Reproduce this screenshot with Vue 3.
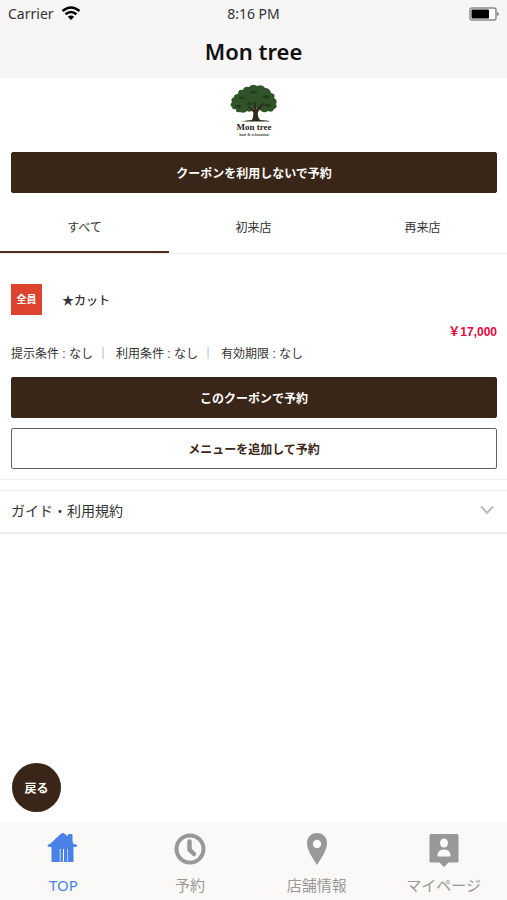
<template>
  <div class="app-screen">
    <header class="app-header">
      <div class="status-bar">
        <div class="carrier">
          <span>Carrier</span>
          <svg class="wifi-icon" viewBox="0 0 20 14" aria-hidden="true">
            <path d="M1.500 5 Q10 -2 18.500 5" />
            <path d="M4.500 8.300 Q10 3.700 15.500 8.300" />
            <path class="wifi-dot" d="M6.800 10.800 Q10 8 13.200 10.800 L10 14 Z" />
          </svg>
        </div>
        <span>8:16 PM</span>
        <svg class="battery-icon" viewBox="0 0 30 14" aria-hidden="true">
          <rect x="1" y="1" width="26" height="12" rx="2" fill="#fff" stroke="#8b8b8b" stroke-width="1.500" />
          <rect x="2.500" y="2.500" width="17.500" height="9" rx="1" fill="#000" />
          <path d="M28 5 Q30 5.500 30 7 Q30 8.500 28 9 Z" fill="#8b8b8b" />
        </svg>
      </div>
      <h1 class="app-title">Mon tree</h1>
    </header>

    <main class="content">
      <svg class="shop-logo" viewBox="0 0 50 56" role="img" aria-label="Mon tree">
        <path
          fill="#315329"
          d="M3 23 Q0 21 3 18 Q1 15 5 13 Q5 10 9 10 Q9 5 14 6 Q15 2 20 3 Q24 -1 28 2 Q34 0 36 4 Q41 4 42 9 Q47 10 45 14 Q49 16 47 20 Q49 24 45 25 Q44 29 39 27 Q35 30 31 26 L28 24 L24 26 Q21 29 18 27 Q15 30 11 28 Q6 29 7 25 Q3 26 3 23 Z"
        />
        <path
          fill="#1f3c1b"
          d="M9 14 Q13 11 16 14 Q12 16 9 14 Z M20 8 Q25 5 29 9 Q24 11 20 8 Z M33 13 Q38 9 41 13 Q37 16 33 13 Z M17 20 Q21 17 25 20 Q21 22 17 20 Z M34 21 Q40 18 43 22 Q38 24 34 21 Z M6 22 Q10 19 13 23 Q9 25 6 22 Z"
        />
        <path
          fill="#33291f"
          d="M23 36 Q25 31 24 28 L18 22 L20 22 L25 26 L25 18 L27 18 L27 25 L34 19 L35 20 L29 28 Q28 32 31 36 Q38 36 41 37.500 L13 37.500 Q17 36 23 36 Z"
        />
        <text class="logo-name" x="25" y="46" text-anchor="middle">Mon tree</text>
        <text class="logo-sub" x="25" y="52" text-anchor="middle">hair &amp; relaxation</text>
      </svg>

      <div class="action-row">
        <button type="button" class="btn btn-primary">クーポンを利用しないで予約</button>
      </div>

      <div class="tabs" role="tablist">
        <button
          v-for="tab in tabs"
          :key="tab"
          type="button"
          role="tab"
          class="tab"
          :class="{ active: tab === activeTab }"
          :aria-selected="tab === activeTab"
          @click="activeTab = tab"
        >
          {{ tab }}
        </button>
      </div>

      <article class="coupon">
        <div class="coupon-head">
          <span class="coupon-tag">全員</span>
          <h2 class="coupon-name">★カット</h2>
        </div>
        <p class="coupon-price">￥17,000</p>
        <ul class="conditions">
          <li v-for="item in conditions" :key="item">{{ item }}</li>
        </ul>
        <div class="coupon-actions">
          <button type="button" class="btn btn-primary">このクーポンで予約</button>
          <button type="button" class="btn btn-outline">メニューを追加して予約</button>
        </div>
      </article>

      <button type="button" class="guide">
        <span>ガイド・利用規約</span>
        <svg class="chevron" viewBox="0 0 14 10" aria-hidden="true">
          <path d="M1 1.500 L7 8 L13 1.500" />
        </svg>
      </button>

      <button type="button" class="back-button">戻る</button>
    </main>

    <nav class="bottom-nav">
      <a href="#top" class="nav-item active">
        <svg class="nav-icon" viewBox="0 0 34 34" aria-hidden="true">
          <path d="M17 1 Q18.500 1 22 4.500 V3 Q22 2 23 2 H25.500 Q26.500 2 26.500 3 V9 L27.500 12 Q31 12 31 13.500 Q31 15 27.500 15 V30 H21.800 V17 H21.200 V30 H18 V17 H17 V30 H14.500 V17 H13.800 V30 H5.500 V15 Q1.500 15 1.500 13.500 Q1.500 12 4 12 L14 2.500 Q15.500 1 17 1 Z" />
        </svg>
        <span>TOP</span>
      </a>
      <a href="#reserve" class="nav-item">
        <svg class="nav-icon" viewBox="0 0 34 34" aria-hidden="true">
          <circle cx="17" cy="17" r="13.500" fill="none" stroke="currentColor" stroke-width="4" />
          <path d="M16.500 9.500 V17.500 L21 22" fill="none" stroke="currentColor" stroke-width="4.500" stroke-linecap="round" />
        </svg>
        <span>予約</span>
      </a>
      <a href="#shop" class="nav-item">
        <svg class="nav-icon" viewBox="0 0 34 34" aria-hidden="true">
          <path
            fill-rule="evenodd"
            d="M17 1 C11 1 7 5.500 7 11 C7 18 12.500 26 17 33 C21.500 26 27 18 27 11 C27 5.500 23 1 17 1 Z M17 7.800 A4.200 4.200 0 1 1 17 16.200 A4.200 4.200 0 1 1 17 7.800 Z"
          />
        </svg>
        <span>店舗情報</span>
      </a>
      <a href="#mypage" class="nav-item">
        <svg class="nav-icon" viewBox="0 0 34 34" aria-hidden="true">
          <path d="M4 2 H30 Q31.500 2 31.500 3.500 V29 Q31.500 30.500 30 30.500 H21.500 L17 35 L12.500 30.500 H4 Q2.500 30.500 2.500 29 V3.500 Q2.500 2 4 2 Z" />
          <ellipse cx="17" cy="11" rx="4" ry="4.500" fill="#faf9f8" />
          <path d="M10.500 24.500 V22.500 Q11.500 17.500 17 17.500 Q22.500 17.500 23.500 22.500 V24.500 Z" fill="#faf9f8" />
        </svg>
        <span>マイページ</span>
      </a>
    </nav>
  </div>
</template>

<script setup>
import { ref } from 'vue';

const tabs = ['すべて', '初来店', '再来店'];
const activeTab = ref('すべて');
const conditions = ['提示条件 : なし', '利用条件 : なし', '有効期限 : なし'];
</script>

<style>
body {
  margin: 0;
  background: #fff;
}
</style>

<style scoped>
.app-screen {
  display: flex;
  flex-direction: column;
  min-height: 100vh;
  background: #fff;
  color: #333;
  font-family: "Liberation Sans", "Noto Sans CJK JP", sans-serif;
  font-size: 12px;
}

button {
  margin: 0;
  padding: 0;
  border: 0;
  background: none;
  color: inherit;
  font-family: inherit;
  font-size: 12px;
  cursor: pointer;
}

.app-header {
  height: 78px;
  background: #f7f5f6;
  font-family: "Noto Sans", "Noto Sans CJK JP", sans-serif;
}

.status-bar {
  display: grid;
  grid-template-columns: 1fr auto 1fr;
  align-items: center;
  height: 27px;
  padding: 0 8px;
  font-size: 14px;
  color: #333;
}

.carrier {
  display: flex;
  align-items: center;
  gap: 7px;
}

.wifi-icon {
  width: 20px;
  height: 14px;
  margin-bottom: 2px;
  fill: none;
  stroke: #000;
  stroke-width: 2.5;
}

.wifi-icon .wifi-dot {
  fill: #000;
  stroke: none;
}

.battery-icon {
  justify-self: end;
  width: 30px;
  height: 14px;
}

.app-title {
  margin: 0;
  font-size: 22px;
  font-weight: 600;
  line-height: 48px;
  text-align: center;
  color: #111;
}

.content {
  display: flex;
  flex: 1;
  flex-direction: column;
}

.shop-logo {
  align-self: center;
  width: 50px;
  height: 56px;
  margin: 6px 0 12px;
}

.logo-name {
  font-family: "Liberation Serif", serif;
  font-size: 9px;
  font-weight: 700;
  fill: #2c1d1a;
}

.logo-sub {
  font-family: "Liberation Serif", serif;
  font-size: 4px;
  font-weight: 700;
  fill: #444;
}

.action-row {
  padding: 0 10px 0 11px;
}

.btn {
  display: block;
  width: 100%;
  height: 41px;
  border: 1px solid #3a2618;
  border-radius: 2px;
  font-weight: 700;
}

.btn-primary {
  background: #3a2618;
  color: #fff;
}

.btn-outline {
  background: #fff;
  border-color: #6b5f57;
  color: #3a2618;
}

.tabs {
  display: grid;
  grid-template-columns: repeat(3, 1fr);
  margin-top: 8px;
  border-bottom: 1px solid #eee;
}

.tab {
  height: 52px;
  border-bottom: 2px solid transparent;
}

.tab.active {
  border-color: #4a2c20;
}

.coupon {
  padding: 30px 10px 10px 11px;
  border-bottom: 1px solid #eee;
}

.coupon-head {
  display: flex;
  align-items: center;
  gap: 20px;
}

.coupon-tag {
  width: 31px;
  background: #dc4430;
  color: #fff;
  font-size: 10px;
  font-weight: 700;
  line-height: 31px;
  text-align: center;
}

.coupon-name {
  margin: 0;
  font-size: 12px;
  font-weight: 500;
}

.coupon-price {
  margin: 6px 0 0;
  color: #e6063c;
  font-weight: 700;
  line-height: 22px;
  text-align: right;
}

.conditions {
  display: flex;
  margin: 0;
  padding: 0;
  list-style: none;
  line-height: 22px;
}

.conditions li + li::before {
  content: "｜";
  margin: 0 7px 0 4px;
  color: #777;
}

.coupon-actions {
  display: grid;
  gap: 10px;
  margin-top: 12px;
}

.guide {
  display: flex;
  align-items: center;
  justify-content: space-between;
  height: 44px;
  margin-top: 10px;
  padding: 0 13px 4px 11px;
  border-top: 1px solid #eee;
  border-bottom: 2px solid #eee;
  font-size: 14px;
}

.chevron {
  width: 14px;
  height: 10px;
  fill: none;
  stroke: #bbb;
  stroke-width: 2;
}

.back-button {
  width: 49px;
  height: 49px;
  margin: auto 0 10px 12px;
  border-radius: 50%;
  background: #3a2618;
  color: #fff;
  font-weight: 700;
}

.bottom-nav {
  display: grid;
  grid-template-columns: repeat(4, 1fr);
  height: 78px;
  background: #faf9f8;
}

.nav-item {
  display: flex;
  flex-direction: column;
  align-items: center;
  gap: 8px;
  padding-top: 10px;
  color: #999896;
  font-family: "Noto Sans", "Noto Sans CJK JP", sans-serif;
  font-size: 15px;
  line-height: 22px;
  text-decoration: none;
}

.nav-item.active {
  color: #4b82e8;
}

.nav-icon {
  width: 34px;
  height: 34px;
  overflow: visible;
  fill: currentColor;
}
</style>
